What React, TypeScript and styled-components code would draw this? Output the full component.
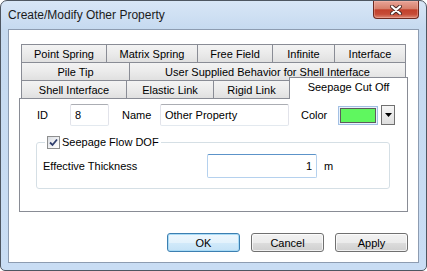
import React from "react";
import styled, { createGlobalStyle, css } from "styled-components";

const GlobalStyle = createGlobalStyle`
  html, body {
    margin: 0;
    padding: 0;
    background: #ffffff;
  }
  body {
    font-family: "Liberation Sans", Arial, sans-serif;
    font-size: 11px;
    color: #000000;
  }
  * {
    box-sizing: border-box;
  }
`;

// Window frame
const Window = styled.div`
  width: 427px;
  height: 271px;
  display: flex;
  flex-direction: column;
  border: 1px solid #4e5661;
  border-radius: 7px 7px 5px 5px;
  background: linear-gradient(180deg, #d8e6f6 0%, #c6daf0 28px, #c9ddf4 100%);
  overflow: hidden;
`;

const TitleBar = styled.div`
  height: 28px;
  flex: none;
  display: flex;
  justify-content: space-between;
  align-items: flex-start;
  padding: 0 7px;
`;

const Title = styled.span`
  margin-top: 7px;
  font-size: 12px;
  line-height: 15px;
  color: #1b1b1b;
`;

const CloseButton = styled.div`
  width: 46px;
  height: 18px;
  display: flex;
  align-items: center;
  justify-content: center;
  border: 1px solid #6e2a20;
  border-top: none;
  border-radius: 0 0 4px 4px;
  background: linear-gradient(
    180deg,
    #e8a497 0%,
    #d7806c 45%,
    #c2412c 52%,
    #c64c37 78%,
    #dd8a76 100%
  );
  box-shadow: inset 0 0 0 1px rgba(255, 200, 190, 0.35);
`;

// Client area
const Client = styled.div`
  flex: 1;
  margin: 0 7px 7px;
  border: 1px solid #8d9cb1;
  background: #ffffff;
  padding: 14px 10px 0 10px;
  display: flex;
  flex-direction: column;
`;

// Tabs
const TabStrip = styled.div`
  display: flex;
  flex-direction: column;
  padding-left: 2px;
`;

const TabRow = styled.div`
  display: flex;
  height: 18px;
`;

const Tab = styled.div<{ $w: number; $active?: boolean }>`
  width: ${(p) => p.$w}px;
  height: 18px;
  flex: none;
  margin-right: -1px;
  border: 1px solid #898c95;
  border-bottom: none;
  background: linear-gradient(180deg, #f3f3f3 0%, #ebebeb 50%, #e0e0e0 100%);
  display: flex;
  align-items: center;
  justify-content: center;
  line-height: 13px;
  padding-top: 1px;
  white-space: nowrap;

  ${(p) =>
    p.$active &&
    css`
      height: 22px;
      margin-top: -3px;
      margin-bottom: -1px;
      padding: 0 0 3px;
      background: #ffffff;
      position: relative;
      z-index: 1;
    `}
`;

const Panel = styled.div`
  height: 114px;
  flex: none;
  border: 1px solid #898c95;
  background: #ffffff;
  padding: 5px 0 0 17px;
  display: flex;
  flex-direction: column;
`;

const FieldRow = styled.div`
  display: flex;
  align-items: center;
  height: 22px;
`;

const Label = styled.span<{ $w: number; $ml?: number }>`
  width: ${(p) => p.$w}px;
  margin-left: ${(p) => p.$ml ?? 0}px;
  flex: none;
  white-space: nowrap;
`;

const TextBox = styled.input<{ $w: number; $h?: number; $focus?: boolean }>`
  width: ${(p) => p.$w}px;
  height: ${(p) => p.$h ?? 22}px;
  flex: none;
  font: inherit;
  color: #000000;
  padding: 0 4px;
  margin: 0;
  outline: none;
  border: 1px solid #e2e3ea;
  border-top-color: #abadb3;
  border-bottom-color: #e3e9ef;
  border-radius: 2px;
  background: #ffffff;

  ${(p) =>
    p.$focus &&
    css`
      text-align: right;
      border-color: #b5d1ee;
      border-top-color: #5c93c9;
    `}
`;

const Swatch = styled.div`
  width: 40px;
  height: 19px;
  flex: none;
  padding: 1px;
  border: 1px solid #a3c0e4;
  background: #e8f1fb;
`;

const SwatchFill = styled.div<{ $color: string }>`
  width: 100%;
  height: 100%;
  border: 1px solid #5c5c5c;
  background: ${(p) => p.$color};
`;

const DropButton = styled.div`
  width: 14px;
  height: 20px;
  margin-left: 3px;
  flex: none;
  display: flex;
  align-items: center;
  justify-content: center;
  border: 1px solid #707070;
  background: linear-gradient(180deg, #f6f6f6, #dedede);
`;

// Group box
const GroupBox = styled.fieldset`
  margin: 9px 17px 0 -1px;
  padding: 5px 0 10px 6px;
  border: 1px solid #d5dfe5;
  border-radius: 3px;
  min-width: 0;
`;

const Legend = styled.legend`
  display: flex;
  align-items: center;
  height: 14px;
  padding: 0 2px;
  margin-left: 2px;
  gap: 2px;
`;

const CheckBox = styled.span`
  width: 13px;
  height: 13px;
  flex: none;
  display: flex;
  align-items: center;
  justify-content: center;
  border: 1px solid #8e8f8f;
  background: linear-gradient(135deg, #dadde2 0%, #f1f2f4 55%, #ffffff 100%);
`;

const ThickRow = styled.div`
  display: flex;
  align-items: center;
`;

const Unit = styled.span`
  margin-left: 7px;
`;

// Buttons
const ButtonRow = styled.div`
  display: flex;
  justify-content: flex-end;
  gap: 11px;
  margin-top: 21px;
`;

const Button = styled.div<{ $default?: boolean }>`
  width: 73px;
  height: 19px;
  display: flex;
  align-items: center;
  justify-content: center;
  border: 1px solid #707070;
  border-radius: 3px;
  background: linear-gradient(180deg, #f2f2f2 0%, #ebebeb 50%, #dddddd 51%, #cfcfcf 100%);
  box-shadow: inset 0 0 0 1px rgba(255, 255, 255, 0.7);

  ${(p) =>
    p.$default &&
    css`
      border-color: #3c7fb1;
      background: linear-gradient(180deg, #eef7fd 0%, #e3f2fc 50%, #d2eafa 51%, #c4e2f6 100%);
      box-shadow: inset 0 0 0 1px #a9dbf6;
    `}
`;

const rows: { label: string; w: number; active?: boolean }[][] = [
  [
    { label: "Point Spring", w: 86 },
    { label: "Matrix Spring", w: 92 },
    { label: "Free Field", w: 76 },
    { label: "Infinite", w: 63 },
    { label: "Interface", w: 72 },
  ],
  [
    { label: "Pile Tip", w: 109 },
    { label: "User Supplied Behavior for Shell Interface", w: 277 },
  ],
  [
    { label: "Shell Interface", w: 106 },
    { label: "Elastic Link", w: 88 },
    { label: "Rigid Link", w: 77 },
    { label: "Seepage Cut Off", w: 119, active: true },
  ],
];

const App: React.FC = () => {
  return (
    <>
      <GlobalStyle />
      <Window>
        <TitleBar>
          <Title>Create/Modify Other Property</Title>
          <CloseButton>
            <svg width="12" height="10" viewBox="0 0 12 10">
              <path
                d="M2 1.5 L10 8.5 M10 1.5 L2 8.5"
                stroke="#4a2a26"
                strokeWidth="4"
                strokeLinecap="round"
              />
              <path
                d="M2 1.5 L10 8.5 M10 1.5 L2 8.5"
                stroke="#ffffff"
                strokeWidth="2.2"
                strokeLinecap="round"
              />
            </svg>
          </CloseButton>
        </TitleBar>

        <Client>
          <TabStrip>
            {rows.map((row, i) => (
              <TabRow key={i}>
                {row.map((t) => (
                  <Tab key={t.label} $w={t.w} $active={t.active}>
                    {t.label}
                  </Tab>
                ))}
              </TabRow>
            ))}
          </TabStrip>

          <Panel>
            <FieldRow>
              <Label $w={33}>ID</Label>
              <TextBox $w={39} defaultValue="8" readOnly />
              <Label $w={38} $ml={13}>
                Name
              </Label>
              <TextBox $w={129} defaultValue="Other Property" readOnly />
              <Label $w={37} $ml={12}>
                Color
              </Label>
              <Swatch>
                <SwatchFill $color="#5ff75f" />
              </Swatch>
              <DropButton>
                <svg width="7" height="4" viewBox="0 0 7 4">
                  <path d="M0 0 H7 L3.5 4 Z" fill="#000000" />
                </svg>
              </DropButton>
            </FieldRow>

            <GroupBox>
              <Legend>
                <CheckBox>
                  <svg width="9" height="9" viewBox="0 0 9 9">
                    <path
                      d="M1 4.5 L3.5 7 L8 1.5"
                      fill="none"
                      stroke="#2f3f6e"
                      strokeWidth="1.8"
                    />
                  </svg>
                </CheckBox>
                Seepage Flow DOF
              </Legend>
              <ThickRow>
                <Label $w={164}>Effective Thickness</Label>
                <TextBox $w={110} $h={24} $focus defaultValue="1" readOnly />
                <Unit>m</Unit>
              </ThickRow>
            </GroupBox>
          </Panel>

          <ButtonRow>
            <Button $default>OK</Button>
            <Button>Cancel</Button>
            <Button>Apply</Button>
          </ButtonRow>
        </Client>
      </Window>
    </>
  );
};

export default App;
